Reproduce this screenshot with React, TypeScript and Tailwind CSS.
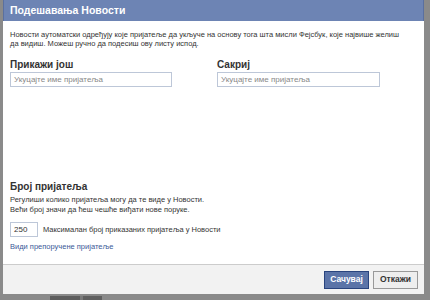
export default function App() {
  return (
    <div className="w-[430px] h-[300px] bg-[#8a8a8a] pl-[3px] pr-[6px] flex flex-col" style={{ fontFamily: '"Liberation Sans", Arial, sans-serif' }}>
      <div className="flex-1 flex flex-col bg-white">
        {/* header */}
        <div className="h-[21px] shrink-0 bg-[#6d84b4] border-x border-[#5a70a0] flex items-center px-[6px]">
          <span className="text-white font-bold text-[10.5px] leading-[13px]">Подешавања Новости</span>
        </div>
        {/* body */}
        <div className="flex-1 px-[7px] pt-[9px] text-[#333]">
          <p className="text-[7.5px] leading-[9px]">
            Новости аутоматски одређују које пријатеље да укључе на основу тога шта мисли Фејсбук, које највише желиш
            <br />
            да видиш. Можеш ручно да подесиш ову листу испод.
          </p>
          <div className="flex gap-[45px] mt-[11px]">
            <div className="w-[162px]">
              <div className="font-bold text-[10px] leading-[11px]">Прикажи још</div>
              <div className="mt-[2px] h-[15px] border border-[#bdc7d8] flex items-center px-[3px] text-[8px] text-[#888]">Укуцајте име пријатеља</div>
            </div>
            <div className="w-[163px]">
              <div className="font-bold text-[10px] leading-[11px]">Сакриј</div>
              <div className="mt-[2px] h-[15px] border border-[#bdc7d8] flex items-center px-[3px] text-[8px] text-[#888]">Укуцајте име пријатеља</div>
            </div>
          </div>
          <div className="mt-[94px]">
            <div className="font-bold text-[10px] leading-[11px]">Број пријатеља</div>
            <p className="mt-[3px] text-[7.5px] leading-[10px]">
              Регулиши колико пријатеља могу да те виде у Новости.
              <br />
              Већи број значи да ћеш чешће виђати нове поруке.
            </p>
            <div className="mt-[7px] flex items-center gap-[5px]">
              <div className="w-[28px] h-[15px] border border-[#bdc7d8] flex items-center px-[3px] text-[8px]">250</div>
              <span className="text-[7.5px]">Максималан број приказаних пријатеља у Новости</span>
            </div>
            <div className="mt-[5px] text-[7.5px] leading-[9px] text-[#3b5998]">Види препоручене пријатеље</div>
          </div>
        </div>
        {/* footer */}
        <div className="h-[30px] shrink-0 bg-[#f2f2f2] border-t border-[#cccccc] flex items-center justify-end gap-[4px] pr-[6px]">
          <button className="h-[18px] w-[45px] bg-[#5b74a8] border border-[#29447e] text-white font-bold text-[8.5px]">Сачувај</button>
          <button className="h-[18px] w-[45px] bg-[#eeeeee] border border-[#999999] text-[#333] font-bold text-[8.5px]">Откажи</button>
        </div>
      </div>
      {/* page behind the dialog */}
      <div className="h-[6px] shrink-0 flex items-end pl-[47px]">
        <div className="h-[4px] w-[30px] bg-[#5e5e5e]" />
        <div className="h-[4px] w-[3px] bg-[#7a7a7a]" />
        <div className="h-[4px] w-[19px] bg-[#606060]" />
      </div>
    </div>
  );
}
